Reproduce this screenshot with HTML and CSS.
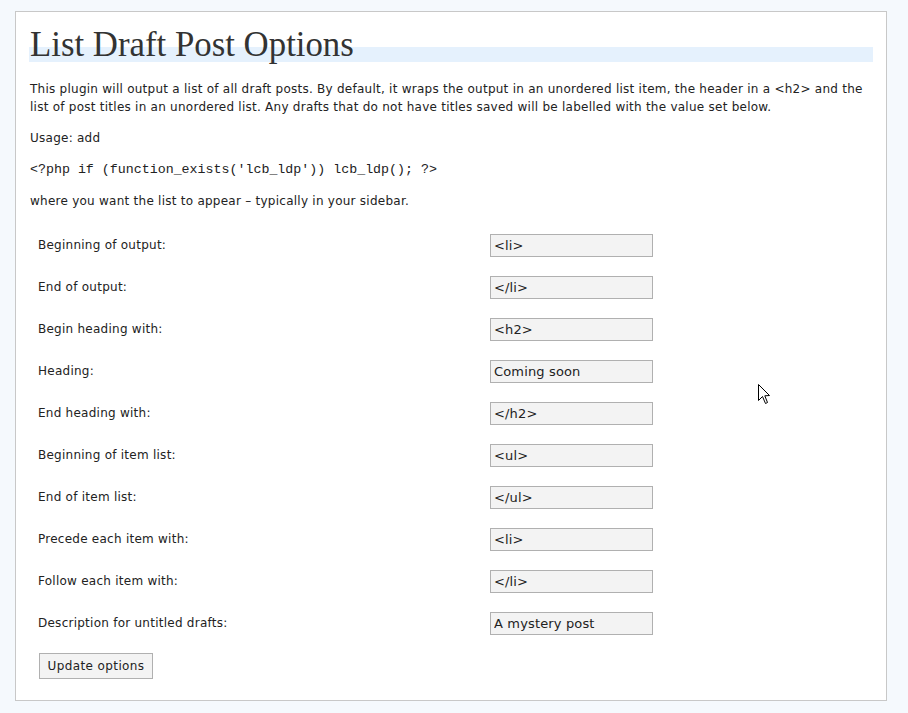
FILE: index.html
```html
<!DOCTYPE html>
<html>
<head>
<meta charset="utf-8">
<link rel="stylesheet" href="styles.css">
</head>
<body>
<div class="wrap">
  <h2 class="title">List Draft Post Options</h2>
  <p>This plugin will output a list of all draft posts. By default, it wraps the output in an unordered list item, the header in a &lt;h2&gt; and the list of post titles in an unordered list. Any drafts that do not have titles saved will be labelled with the value set below.</p>
  <p>Usage: add</p>
  <p><code>&lt;?php if (function_exists('lcb_ldp')) lcb_ldp(); ?&gt;</code></p>
  <p>where you want the list to appear – typically in your sidebar.</p>
  <form class="options">
    <div class="row"><label>Beginning of output:</label><input class="field" type="text" value="&lt;li&gt;"></div>
    <div class="row"><label>End of output:</label><input class="field" type="text" value="&lt;/li&gt;"></div>
    <div class="row"><label>Begin heading with:</label><input class="field" type="text" value="&lt;h2&gt;"></div>
    <div class="row"><label>Heading:</label><input class="field" type="text" value="Coming soon"></div>
    <div class="row"><label>End heading with:</label><input class="field" type="text" value="&lt;/h2&gt;"></div>
    <div class="row"><label>Beginning of item list:</label><input class="field" type="text" value="&lt;ul&gt;"></div>
    <div class="row"><label>End of item list:</label><input class="field" type="text" value="&lt;/ul&gt;"></div>
    <div class="row"><label>Precede each item with:</label><input class="field" type="text" value="&lt;li&gt;"></div>
    <div class="row"><label>Follow each item with:</label><input class="field" type="text" value="&lt;/li&gt;"></div>
    <div class="row"><label>Description for untitled drafts:</label><input class="field" type="text" value="A mystery post"></div>
    <div class="actions"><button type="button" class="btn">Update options</button></div>
  </form>
</div>
<svg class="cursor" width="13" height="21" viewBox="0 0 13 21"><path d="M0.5 0.5 L0.5 16.5 L4.5 12.5 L7.5 19.5 L9.5 18.5 L6.8 11.8 L11.5 11.5 Z" fill="#fff" stroke="#000" stroke-width="1"/></svg>
</body>
</html>
```
FILE: styles.css
```css
html, body {
  margin: 0;
  padding: 0;
}
body {
  background: #f5f9fd;
  font-family: "DejaVu Sans", sans-serif;
  font-size: 12px;
  letter-spacing: 0.25px;
  color: #222;
  width: 908px;
  height: 713px;
  overflow: hidden;
  position: relative;
}
.wrap {
  box-sizing: border-box;
  margin: 11px 0 0 15px;
  width: 872px;
  height: 690px;
  background: #fff;
  border: 1px solid #c8c8c8;
  padding: 30px 13px 0 13px;
}
.title {
  margin: 0 0 18px 0;
  font-family: "Liberation Serif", serif;
  font-weight: normal;
  font-size: 34.8px;
  letter-spacing: 0;
  line-height: 5px;
  color: #333;
  border-bottom: 15px solid #e5f1fd;
  padding-left: 1px;
}
p {
  margin: 0 0 13px 0;
  line-height: 18px;
  padding-left: 1px;
}
code {
  font-family: "Liberation Mono", monospace;
  font-size: 13.3px;
  letter-spacing: 0;
}
.options {
  margin-top: 14px;
}
.row {
  display: grid;
  grid-template-columns: 452px 163px;
  align-items: center;
  height: 42px;
  padding-left: 9px;
}
.field {
  box-sizing: border-box;
  width: 163px;
  height: 23px;
  margin: 0;
  padding: 0 3px;
  border: 1px solid #b0b0b0;
  background: #f3f3f3;
  font-family: "DejaVu Sans", sans-serif;
  font-size: 13px;
  letter-spacing: 0.15px;
  color: #222;
}
.actions {
  padding: 9px 0 0 10px;
}
.btn {
  box-sizing: border-box;
  width: 114px;
  height: 26px;
  margin: 0;
  padding: 0;
  border: 1px solid #b0b0b0;
  background: #f3f3f3;
  font-family: "DejaVu Sans", sans-serif;
  font-size: 12px;
  letter-spacing: 0.4px;
  color: #222;
}
.cursor {
  position: absolute;
  left: 758px;
  top: 384px;
}
```
